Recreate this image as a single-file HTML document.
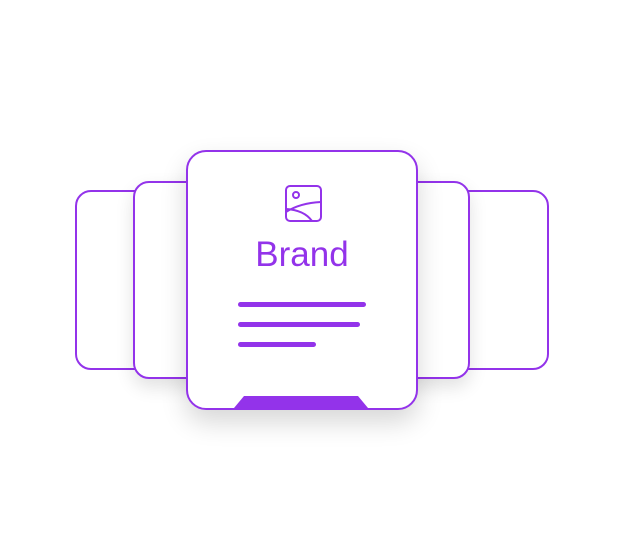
<!DOCTYPE html>
<html><head><style>
body{margin:0;width:624px;height:560px;background:#fff;position:relative;overflow:hidden;font-family:"Liberation Sans",sans-serif}
.c{position:absolute;box-sizing:border-box;border:2px solid #9333ea;background:#fff;border-radius:16px}
.l{position:absolute;height:5px;background:#9333ea;border-radius:3px;left:238px}
</style></head><body>
<div class="c" style="left:75px;top:190px;width:160px;height:180px"></div>
<div class="c" style="left:389px;top:190px;width:160px;height:180px"></div>
<div class="c" style="left:133px;top:181px;width:160px;height:198px;box-shadow:0 8px 18px rgba(0,0,0,.12)"></div>
<div class="c" style="left:310px;top:181px;width:160px;height:198px;box-shadow:0 8px 18px rgba(0,0,0,.12)"></div>
<div class="c" style="left:186px;top:150px;width:232px;height:260px;border-radius:20px;box-shadow:0 12px 26px rgba(0,0,0,.16);overflow:hidden">
<svg style="position:absolute;left:96px;top:32px" width="40" height="40" viewBox="0 0 40 40" fill="none" stroke="#9333ea" stroke-width="2">
<rect x="2" y="2" width="35" height="35" rx="4"/><circle cx="12" cy="11" r="3"/>
<path d="M2 28 Q16 19 37 18"/><path d="M2 25 Q20 26 28 37"/>
</svg>
<div style="position:absolute;left:0;right:0;top:83px;text-align:center;color:#9333ea;font-size:35px">Brand</div>
<svg style="position:absolute;left:46px;bottom:0" width="136" height="14"><polygon points="0,14 10,2 124,2 134,14" fill="#9333ea"/></svg>
</div>
<div class="l" style="top:302px;width:128px"></div>
<div class="l" style="top:322px;width:122px"></div>
<div class="l" style="top:342px;width:78px"></div>
</body></html>
